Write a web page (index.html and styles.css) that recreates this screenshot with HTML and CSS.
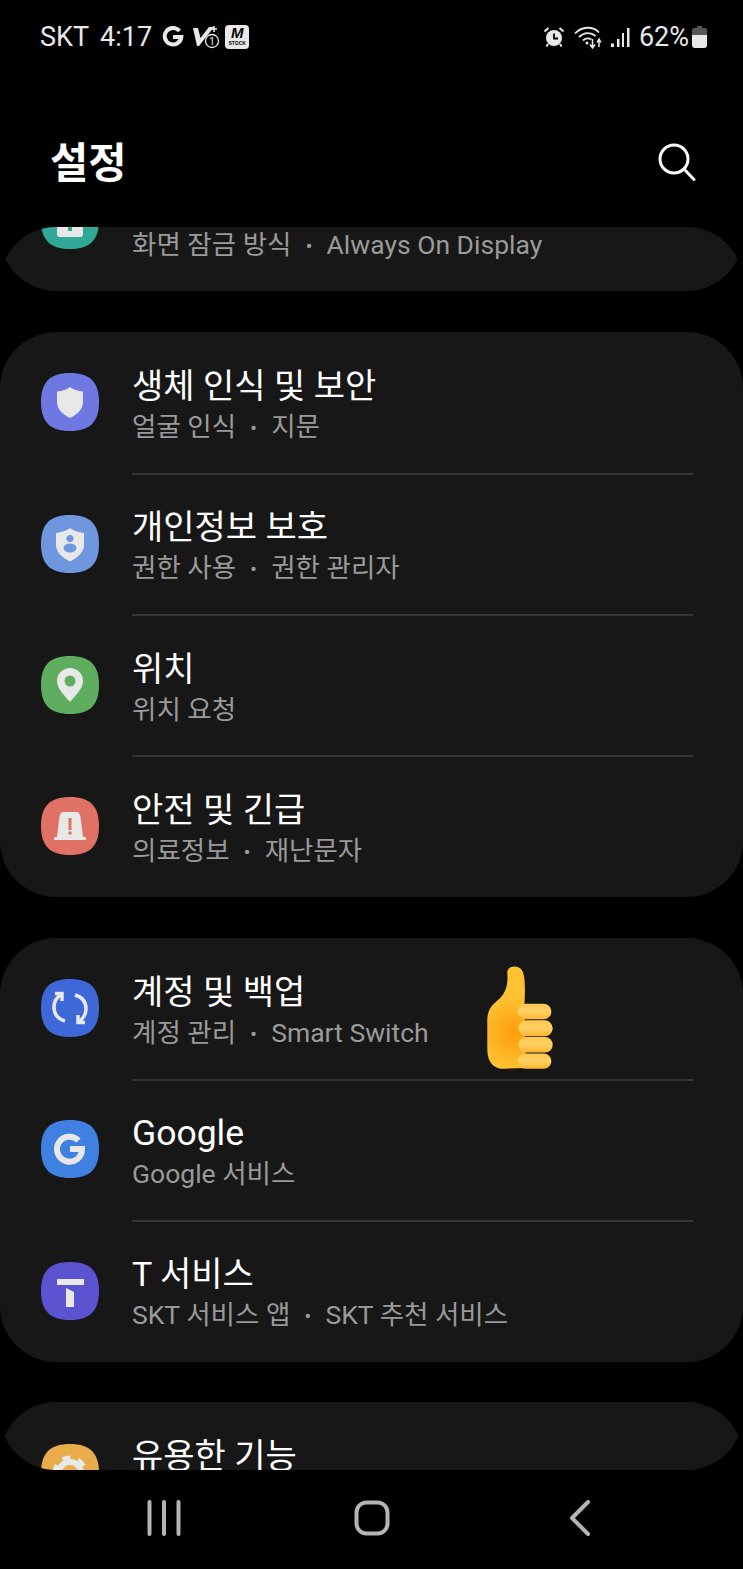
FILE: index.html
```html
<!DOCTYPE html>
<html lang="ko">
<head>
  <meta charset="UTF-8" />
  <meta name="viewport" content="width=device-width, initial-scale=1" />
  <title>설정</title>
  <link rel="stylesheet" href="styles.css">
</head>
<body>
  <svg class="defs" width="0" height="0">
    <symbol id="squircle" viewBox="0 0 58 58">
      <path d="M29 0C49 0 58 9 58 29S49 58 29 58 0 49 0 29 9 0 29 0Z" />
    </symbol>
  </svg>

  <div class="page">
    <!-- status bar -->
    <div class="status-bar">
      <div class="status-left">
        <span class="carrier">SKT</span>
        <span class="clock">4:17</span>
        <svg class="st-g" width="22" height="22" viewBox="0 0 22 22"><path d="M17.500 5A8.300 8.300 0 1 0 19.300 11H11" fill="none" stroke="#e8e8e8" stroke-width="4" /></svg>
        <svg class="st-v" width="28" height="26" viewBox="0 0 28 26">
          <path d="M1 4H6L8.500 14 17 3H22L7 22H5Z" fill="#e8e8e8" />
          <path d="M19 5H25M22 2V8" stroke="#e8e8e8" stroke-width="1.600" />
          <circle cx="20" cy="17" r="6.500" fill="#000" stroke="#e8e8e8" stroke-width="1.300" />
          <text x="20" y="21" class="st-v-num">1</text>
        </svg>
        <div class="stock"><span class="stock-m">M</span><span class="stock-t">STOCK</span></div>
      </div>
      <div class="status-right">
        <svg class="st-alarm" width="22" height="22" viewBox="0 0 22 22">
          <circle cx="11" cy="12" r="8" fill="#e8e8e8" />
          <path d="M11 7.500V12.500H15" fill="none" stroke="#000" stroke-width="1.800" />
          <path d="M1.500 5.500L5.500 2M20.500 5.500L16.500 2M5 18L3.500 20.500M17 18L18.500 20.500" stroke="#e8e8e8" stroke-width="2" fill="none" />
        </svg>
        <svg class="st-wifi" width="31" height="24" viewBox="0 0 31 24">
          <g fill="none" stroke="#e8e8e8" stroke-width="1.800">
            <path d="M1 8.500C8 1 19 1 25 7.500" />
            <path d="M5 12C10 7 17 7 21.500 11" />
            <path d="M9 15.500C11.500 13 15 13 17.500 14.500" />
          </g>
          <circle cx="13" cy="18" r="1.500" fill="#e8e8e8" />
          <path d="M18.500 14V22M16 19.500L18.500 23 21 19.500M25 22V15M23 17.500L25 14 27 17.500" stroke="#e8e8e8" stroke-width="1.500" fill="none" />
        </svg>
        <svg class="st-signal" width="20" height="22" viewBox="0 0 20 22">
          <path d="M1 17.500H4V21H1ZM7 13H9.500V21H7ZM12 7H14V21H12ZM17 2H19.500V21H17Z" fill="#e8e8e8" />
        </svg>
        <span class="battery-text">62%</span>
        <svg class="st-batt" width="15" height="22" viewBox="0 0 15 22">
          <path d="M5 0H10V2H13Q15 2 15 4V9H0V4Q0 2 2 2H5Z" fill="#555" />
          <path d="M0 9H15V19Q15 22 12 22H3Q0 22 0 19Z" fill="#e8e8e8" />
        </svg>
      </div>
    </div>

    <!-- title -->
    <div class="app-header">
      <h1 class="app-title">설정</h1>
      <svg class="search-icon" width="38" height="38" viewBox="0 0 38 38">
        <circle cx="16" cy="16" r="14" fill="none" stroke="#fff" stroke-width="3" />
        <path d="M26 26L36 36.500" fill="none" stroke="#fff" stroke-width="3" stroke-linecap="round" />
      </svg>
    </div>

    <!-- settings list -->
    <div class="scroller">
      <div class="card card-scrolled">
        <div class="row">
          <svg class="row-icon" viewBox="0 0 58 58">
            <use href="#squircle" fill="#2fa996" />
            <path d="M21 26V21A8 8 0 0 1 37 21V26" fill="none" stroke="#e8e8e8" stroke-width="3" />
            <rect x="16" y="26" width="26" height="20" rx="3" fill="#e8e8e8" />
            <rect x="27" y="33" width="4" height="7" fill="#2fa996" />
          </svg>
          <div class="row-body row-last row-scrolled">
            <div class="row-sub">화면 잠금 방식<span class="dot">•</span>Always On Display</div>
          </div>
        </div>
      </div>

      <div class="card">
        <div class="row">
          <svg class="row-icon" viewBox="0 0 58 58">
            <use href="#squircle" fill="#6e78e3" />
            <path d="M29 14C32 16.500 37 18 42 18.500V29C42 37 35 42 29 45 23 42 16 37 16 29V18.500C21 18 26 16.500 29 14Z" fill="#e8e8e8" />
          </svg>
          <div class="row-body">
            <div class="row-title">생체 인식 및 보안</div>
            <div class="row-sub">얼굴 인식<span class="dot">•</span>지문</div>
          </div>
        </div>
        <div class="row">
          <svg class="row-icon" viewBox="0 0 58 58">
            <use href="#squircle" fill="#6f97df" />
            <path d="M29 13C32 15.500 38 17.500 43 18V30C43 38 35 43.500 29 46.500 23 43.500 15 38 15 30V18C20 17.500 26 15.500 29 13Z" fill="#e8e8e8" />
            <circle cx="29" cy="23.500" r="3.500" fill="#6f97df" />
            <ellipse cx="29" cy="33" rx="6.500" ry="4.500" fill="#6f97df" />
          </svg>
          <div class="row-body">
            <div class="row-title">개인정보 보호</div>
            <div class="row-sub">권한 사용<span class="dot">•</span>권한 관리자</div>
          </div>
        </div>
        <div class="row">
          <svg class="row-icon" viewBox="0 0 58 58">
            <use href="#squircle" fill="#5fae60" />
            <path d="M29 12A13 13 0 0 1 42 25C42 33 34 40 29 46 24 40 16 33 16 25A13 13 0 0 1 29 12Z" fill="#e8e8e8" />
            <circle cx="29" cy="25" r="5.500" fill="#5fae60" />
          </svg>
          <div class="row-body">
            <div class="row-title">위치</div>
            <div class="row-sub">위치 요청</div>
          </div>
        </div>
        <div class="row">
          <svg class="row-icon" viewBox="0 0 58 58">
            <use href="#squircle" fill="#e07265" />
            <path d="M23 15H35C38 15 39 17 39.500 20L42 40H44Q45 40 45 41.500V43H13V41.500Q13 40 14 40H16L18.500 20C19 17 20 15 23 15Z" fill="#e8e8e8" />
            <rect x="27.500" y="21" width="3" height="12" fill="#e07265" />
            <circle cx="29" cy="36" r="1.800" fill="#e07265" />
          </svg>
          <div class="row-body row-last">
            <div class="row-title">안전 및 긴급</div>
            <div class="row-sub">의료정보<span class="dot">•</span>재난문자</div>
          </div>
        </div>
      </div>

      <div class="card">
        <div class="row">
          <svg class="row-icon" viewBox="0 0 58 58">
            <use href="#squircle" fill="#3e68d8" />
            <g fill="none" stroke="#e8e8e8" stroke-width="3.500">
              <path d="M24 42C17 40 13 35 13 28 13 22 16 18 21 14.500" />
              <path d="M21 22V14.500H14" />
              <path d="M34 16C41 18 45 23 45 30 45 36 42 40 37 43.500" />
              <path d="M37 36V43.500H44" />
            </g>
          </svg>
          <div class="row-body">
            <div class="row-title">계정 및 백업</div>
            <div class="row-sub">계정 관리<span class="dot">•</span>Smart Switch</div>
          </div>
          <svg class="thumb" width="73" height="110" viewBox="70 40 220 330">
            <defs>
              <radialGradient id="palm" gradientUnits="userSpaceOnUse" cx="165" cy="250" r="110">
                <stop offset="0" stop-color="#ff9d0a" />
                <stop offset="1" stop-color="#ffc233" />
              </radialGradient>
              <linearGradient id="finger" x1="0" y1="0" x2="0" y2="1">
                <stop offset="0" stop-color="#ffc84f" />
                <stop offset="0.5" stop-color="#ffd164" />
                <stop offset="1" stop-color="#ffb52c" />
              </linearGradient>
            </defs>
            <path d="M143 68C143 46 178 44 188 62 198 80 197 120 195 165L200 356 130 358C100 358 83 335 83 300V210C83 175 105 160 122 145 140 125 146 105 143 68Z" fill="url(#palm)" />
            <rect x="175" y="162" width="101" height="47" rx="23" fill="url(#finger)" />
            <rect x="177" y="212" width="103" height="48" rx="24" fill="url(#finger)" />
            <rect x="177" y="262" width="103" height="47" rx="23" fill="url(#finger)" />
            <rect x="175" y="312" width="101" height="46" rx="23" fill="url(#finger)" />
          </svg>
        </div>
        <div class="row">
          <svg class="row-icon" viewBox="0 0 58 58">
            <use href="#squircle" fill="#3f80e0" />
            <path d="M37.500 20.500A12.500 12.500 0 1 0 41 29H29" fill="none" stroke="#e8e8e8" stroke-width="6" />
          </svg>
          <div class="row-body">
            <div class="row-title row-title-latin">Google</div>
            <div class="row-sub">Google 서비스</div>
          </div>
        </div>
        <div class="row">
          <svg class="row-icon" viewBox="0 0 58 58">
            <use href="#squircle" fill="#5b53d0" />
            <path d="M16 17H43V23H16ZM25 26L33 30V45H25Z" fill="#e8e8e8" />
          </svg>
          <div class="row-body row-last">
            <div class="row-title">T 서비스</div>
            <div class="row-sub">SKT 서비스 앱<span class="dot">•</span>SKT 추천 서비스</div>
          </div>
        </div>
      </div>

      <div class="card">
        <div class="row">
          <svg class="row-icon" viewBox="0 0 58 58">
            <use href="#squircle" fill="#e8ac4b" />
            <circle cx="29" cy="29" r="11" fill="none" stroke="#e8e8e8" stroke-width="6" />
            <circle cx="29" cy="29" r="15" fill="none" stroke="#e8e8e8" stroke-width="5" stroke-dasharray="8 7.700" />
          </svg>
          <div class="row-body row-last">
            <div class="row-title">유용한 기능</div>
          </div>
        </div>
      </div>
    </div>

    <!-- nav buttons -->
    <div class="nav-bar">
      <svg width="34" height="36" viewBox="0 0 34 36" class="nav-recent">
        <path d="M2.500 2V34M17 2V34M31.500 2V34" fill="none" stroke="#b4b4b4" stroke-width="4" stroke-linecap="round" />
      </svg>
      <svg width="36" height="36" viewBox="0 0 36 36" class="nav-home">
        <rect x="2.500" y="2.500" width="31" height="31" rx="10" fill="none" stroke="#b4b4b4" stroke-width="4" />
      </svg>
      <svg width="22" height="36" viewBox="0 0 22 36" class="nav-back">
        <path d="M18 2L2 18 18 34" fill="none" stroke="#b4b4b4" stroke-width="4" stroke-linecap="round" stroke-linejoin="round" />
      </svg>
    </div>
  </div>
</body>
</html>
```

FILE: styles.css
```css
* {
  box-sizing: border-box;
}
html, body {
  margin: 0;
  padding: 0;
  background: #000;
}
body {
  font-family: Roboto, "Noto Sans CJK KR", sans-serif;
  color: #fff;
}
.defs {
  display: block;
  height: 0;
}
.page {
  width: 743px;
  height: 1569px;
  display: flex;
  flex-direction: column;
  overflow: hidden;
}

/* status bar */
.status-bar {
  height: 74px;
  flex: none;
  display: flex;
  align-items: center;
  justify-content: space-between;
  padding: 0 36px 0 40px;
  font-size: 27px;
  color: #e8e8e8;
}
.status-left, .status-right {
  display: flex;
  align-items: center;
}
.clock {
  margin-left: 11px;
}
.st-g {
  margin-left: 10px;
}
.st-v {
  margin-left: 8px;
}
.st-v-num {
  font-size: 10px;
  fill: #e8e8e8;
  text-anchor: middle;
}
.stock {
  width: 24px;
  height: 24px;
  margin-left: 5px;
  background: #e8e8e8;
  border-radius: 4px;
  color: #000;
  display: flex;
  flex-direction: column;
  align-items: center;
  font-family: "Liberation Sans", sans-serif;
  font-weight: 700;
}
.stock-m {
  font-size: 15px;
  line-height: 15px;
  font-style: italic;
}
.stock-t {
  font-size: 5px;
  line-height: 6px;
}
.st-wifi {
  margin-left: 9px;
}
.st-signal {
  margin-left: 5px;
}
.battery-text {
  margin-left: 9px;
}
.st-batt {
  margin-left: 3px;
}

/* header */
.app-header {
  height: 153px;
  flex: none;
  display: flex;
  align-items: flex-start;
  justify-content: space-between;
  padding: 63px 47px 0 50px;
}
.app-title {
  margin: 0;
  font-size: 41.500px;
  line-height: 54px;
  font-weight: 700;
}
.search-icon {
  margin-top: 6px;
}

/* list */
.scroller {
  flex: 1;
  min-height: 0;
  overflow: hidden;
  border-radius: 56px;
  display: flex;
  flex-direction: column;
  gap: 40.700px;
}
.card {
  flex: none;
  background: #171717;
  border-radius: 56px;
}
.card-scrolled {
  margin-top: -77px;
}
.row {
  height: 141.300px;
  display: flex;
  padding-left: 41px;
  position: relative;
}
.row-icon {
  flex: none;
  width: 58px;
  height: 58px;
  margin-top: 41.300px;
}
.row-body {
  flex: 1;
  margin: 0 50px -1.500px 33px;
  padding-top: 33px;
  border-bottom: 2px solid #363636;
}
.row-last {
  margin-bottom: 0;
  border-bottom: none;
}
.row-scrolled {
  padding-top: 75px;
}
.row-title {
  font-size: 34px;
  line-height: 42px;
}
.row-title-latin {
  font-size: 35.500px;
}
.row-sub {
  font-size: 26.500px;
  line-height: 36px;
  margin-top: 2px;
  color: #9a9a9a;
}
.dot {
  margin: 0 14px;
  font-size: 21px;
  vertical-align: 1px;
}
.thumb {
  position: absolute;
  left: 483px;
  top: 25.400px;
  z-index: 1;
}

/* bottom nav */
.nav-bar {
  height: 99px;
  flex: none;
  display: grid;
  grid-template-columns: 326px 217px 1fr;
  align-items: start;
  padding-top: 30px;
}
.nav-recent {
  margin-left: 147px;
}
.nav-home {
  margin-left: 28px;
}
.nav-back {
  margin-left: 27px;
}
```
